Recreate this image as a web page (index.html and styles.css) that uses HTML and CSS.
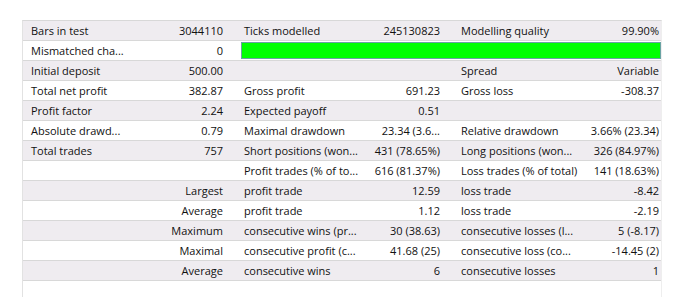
FILE: index.html
```html
<!DOCTYPE html>
<html>
<head>
<meta charset="utf-8">
<link rel="stylesheet" href="styles.css">
</head>
<body>
<div class="report">
  <div class="row gray">
    <div class="c1">Bars in test</div><div class="c2">3044110</div>
    <div class="c3">Ticks modelled</div><div class="c4">245130823</div>
    <div class="c5">Modelling quality</div><div class="c6">99.90%</div>
  </div>
  <div class="row">
    <div class="c1">Mismatched cha...</div><div class="c2">0</div>
    <div class="quality"><div class="quality-bar"></div></div>
  </div>
  <div class="row gray">
    <div class="c1">Initial deposit</div><div class="c2">500.00</div>
    <div class="c3"></div><div class="c4"></div>
    <div class="c5">Spread</div><div class="c6">Variable</div>
  </div>
  <div class="row">
    <div class="c1">Total net profit</div><div class="c2">382.87</div>
    <div class="c3">Gross profit</div><div class="c4">691.23</div>
    <div class="c5">Gross loss</div><div class="c6">-308.37</div>
  </div>
  <div class="row gray">
    <div class="c1">Profit factor</div><div class="c2">2.24</div>
    <div class="c3">Expected payoff</div><div class="c4">0.51</div>
    <div class="c5"></div><div class="c6"></div>
  </div>
  <div class="row">
    <div class="c1">Absolute drawd...</div><div class="c2">0.79</div>
    <div class="c3">Maximal drawdown</div><div class="c4">23.34 (3.6...</div>
    <div class="c5">Relative drawdown</div><div class="c6">3.66% (23.34)</div>
  </div>
  <div class="row gray">
    <div class="c1">Total trades</div><div class="c2">757</div>
    <div class="c3">Short positions (won...</div><div class="c4">431 (78.65%)</div>
    <div class="c5">Long positions (won...</div><div class="c6">326 (84.97%)</div>
  </div>
  <div class="row">
    <div class="c1"></div><div class="c2"></div>
    <div class="c3">Profit trades (% of to...</div><div class="c4">616 (81.37%)</div>
    <div class="c5">Loss trades (% of total)</div><div class="c6">141 (18.63%)</div>
  </div>
  <div class="row gray">
    <div class="c1"></div><div class="c2">Largest</div>
    <div class="c3">profit trade</div><div class="c4">12.59</div>
    <div class="c5">loss trade</div><div class="c6">-8.42</div>
  </div>
  <div class="row">
    <div class="c1"></div><div class="c2">Average</div>
    <div class="c3">profit trade</div><div class="c4">1.12</div>
    <div class="c5">loss trade</div><div class="c6">-2.19</div>
  </div>
  <div class="row gray">
    <div class="c1"></div><div class="c2">Maximum</div>
    <div class="c3">consecutive wins (pr...</div><div class="c4">30 (38.63)</div>
    <div class="c5">consecutive losses (l...</div><div class="c6">5 (-8.17)</div>
  </div>
  <div class="row">
    <div class="c1"></div><div class="c2">Maximal</div>
    <div class="c3">consecutive profit (c...</div><div class="c4">41.68 (25)</div>
    <div class="c5">consecutive loss (co...</div><div class="c6">-14.45 (2)</div>
  </div>
  <div class="row gray">
    <div class="c1"></div><div class="c2">Average</div>
    <div class="c3">consecutive wins</div><div class="c4">6</div>
    <div class="c5">consecutive losses</div><div class="c6">1</div>
  </div>
</div>
</body>
</html>
```

FILE: styles.css
```css
html, body {
  margin: 0;
  padding: 0;
  background: #ffffff;
  height: 100%;
}
body {
  font-family: "Open Sans", "Noto Sans", sans-serif;
  font-size: 11px;
  color: #111111;
  padding: 20px 0 0 22px;
  box-sizing: border-box;
  overflow: hidden;
}
.report {
  width: 640px;
  height: 277px;
  border-left: 1px solid #e2e2e2;
  border-right: 1px solid #eeeeee;
  border-top: 1px solid #d8d8d8;
  box-sizing: border-box;
}
.row {
  display: grid;
  grid-template-columns: 114px 92px 140px 77px 138px 77px;
  height: 20px;
  border-bottom: 1px solid #d8d8d8;
  box-sizing: border-box;
  align-items: center;
}
.row.gray {
  background: #efecf0;
}
.row > div {
  white-space: nowrap;
  overflow: hidden;
  line-height: 19px;
}
.c1 { padding-left: 8px; }
.c2 { text-align: right; padding-right: 6px; }
.c3 { padding-left: 15px; }
.c4 { text-align: right; padding-right: 6px; }
.c5 { padding-left: 15px; }
.c6 { text-align: right; padding-right: 2px; }
.quality {
  grid-column: 3 / 7;
  height: 19px;
  padding: 1px 0 1px 12px;
  box-sizing: border-box;
}
.quality-bar {
  height: 17px;
  background: #00ff00;
  border: 1px solid #6aa3a3;
  box-sizing: border-box;
}
```
